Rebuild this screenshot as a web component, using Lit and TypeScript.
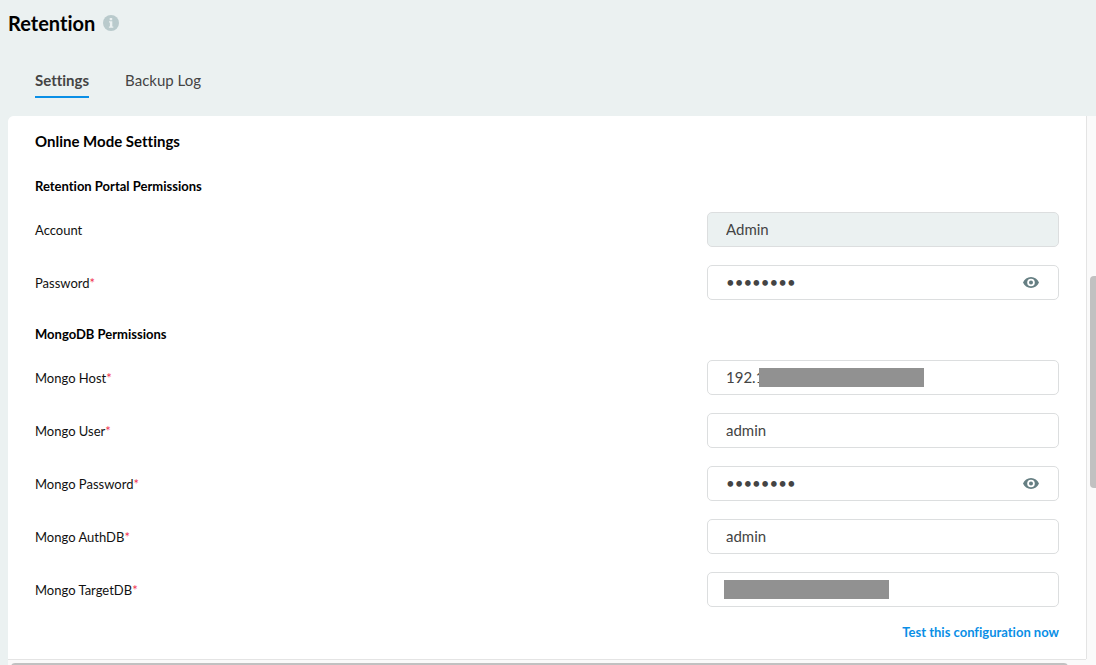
import { LitElement, html, css, svg, nothing } from "lit";
import { customElement, property, state } from "lit/decorators.js";
import { classMap } from "lit/directives/class-map.js";

const eyeIcon = svg`<path fill-rule="evenodd" d="M8 0C4.4 0 1.4 2.1 0 5.5C1.4 8.9 4.4 11 8 11s6.600-2.100 8-5.500C14.600 2.100 11.600 0 8 0zM8 1.700a3.800 3.800 0 1 1 0 7.600a3.800 3.800 0 1 1 0-7.600zM8 3.500a2 2 0 1 0 0 4a2 2 0 1 0 0-4z" />`;

@customElement("form-field")
class FormField extends LitElement {
  @property() label = "";
  @property() value = "";
  @property() mask = "";
  @property({ type: Boolean }) secret = false;
  @property({ type: Boolean }) required = false;
  @property({ type: Boolean }) locked = false;
  @state() private revealed = false;

  static styles = css`
    :host {
      display: grid;
      grid-template-columns: 1fr minmax(200px, 352px);
      align-items: center;
    }
    .label {
      font-size: 13px;
      line-height: 20px;
      color: #111;
    }
    .star {
      color: #f0324f;
    }
    .control {
      position: relative;
      display: flex;
      align-items: center;
      height: 35px;
      box-sizing: border-box;
      border: 1px solid #dcdedf;
      border-radius: 5px;
      background: #fff;
    }
    .control.locked {
      background: #ebf1f1;
    }
    .input {
      flex: 1;
      min-width: 0;
      height: 33px;
      box-sizing: border-box;
      padding: 0 18px 2px;
      border: 0;
      outline: 0;
      background: none;
      font-family: inherit;
      font-size: 15px;
      color: #444;
    }
    .eye {
      display: flex;
      padding: 0;
      margin-right: 19px;
      border: 0;
      background: none;
      color: #667f83;
      cursor: pointer;
    }
    .mask {
      position: absolute;
      top: 7px;
      width: 165px;
      height: 19px;
      background: #919191;
    }
    .mask.partial {
      left: 51px;
    }
    .mask.full {
      left: 16px;
    }
  `;

  render() {
    return html`
      <label class="label" for="input"
        >${this.label}${this.required ? html`<span class="star">*</span>` : nothing}</label
      >
      <div class=${classMap({ control: true, locked: this.locked })}>
        <input
          id="input"
          class="input"
          type=${this.secret && !this.revealed ? "password" : "text"}
          .value=${this.value}
          ?readonly=${this.locked}
        />
        ${this.mask ? html`<span class="mask ${this.mask}"></span>` : nothing}
        ${this.secret
          ? html`<button
              class="eye"
              type="button"
              aria-label="Show password"
              @click=${() => (this.revealed = !this.revealed)}
            >
              <svg width="16" height="11" viewBox="0 0 16 11" fill="currentColor">${eyeIcon}</svg>
            </button>`
          : nothing}
      </div>
    `;
  }
}

@customElement("app-root")
class AppRoot extends LitElement {
  static styles = css`
    :host {
      display: flex;
      flex-direction: column;
      height: 100vh;
      overflow: hidden;
      background: #ebf1f1;
      font-family: Lato, "Liberation Sans", sans-serif;
      font-variant-ligatures: none;
      color: #000;
    }
    .header {
      display: flex;
      align-items: center;
      gap: 8px;
      padding: 9px 8px 0;
    }
    .title {
      margin: 0;
      font-size: 20px;
      line-height: 28px;
      font-weight: 700;
    }
    .info {
      display: block;
    }
    .tabs {
      display: flex;
      gap: 36px;
      padding: 31px 35px 18px;
    }
    .tab {
      padding-bottom: 4px;
      border-bottom: 2px solid transparent;
      font-size: 15px;
      line-height: 24px;
      color: #444;
      text-decoration: none;
    }
    .tab.active {
      font-weight: 700;
      border-color: #0a8fe6;
    }
    .frame {
      flex: 1;
      min-height: 0;
      display: grid;
      grid-template-columns: 1fr 10px;
      grid-template-rows: 1fr 6px;
      margin-left: 8px;
      border-top-left-radius: 6px;
      overflow: hidden;
      background: #fafafa;
    }
    .panel {
      min-height: 0;
      overflow: hidden;
      padding: 14px 27px 0;
      background: #fff;
    }
    .heading {
      margin: 0;
      font-size: 15px;
      line-height: 22px;
      font-weight: 700;
    }
    .subheading {
      margin: 0;
      padding: 24px 0 16px;
      font-size: 13px;
      line-height: 20px;
      font-weight: 700;
    }
    .group {
      display: flex;
      flex-direction: column;
      gap: 18px;
    }
    .actions {
      display: flex;
      justify-content: flex-end;
      padding-top: 15px;
    }
    .test {
      font-size: 13px;
      line-height: 20px;
      font-weight: 700;
      color: #0a8fe6;
      text-decoration: none;
    }
    .vtrack {
      display: grid;
      grid-template-rows: 160fr 212fr 171fr;
      border-left: 1px solid #e4e4e4;
      padding-left: 3px;
    }
    .vthumb {
      grid-row: 2;
      border-radius: 4px 0 0 4px;
      background: #c1c1c1;
    }
    .htrack {
      border-top: 1px solid #e4e4e4;
      padding: 3px 18px 0 3px;
    }
    .hthumb {
      height: 8px;
      border-radius: 4px;
      background: #c1c1c1;
    }
  `;

  render() {
    return html`
      <header class="header">
        <h1 class="title">Retention</h1>
        <svg class="info" width="16" height="16" viewBox="0 0 16 16">
          <circle cx="8" cy="8" r="8" fill="#b9cacc" />
          <path fill="#ebf1f1" d="M6.700 3h2.500v2.200H6.700zM6 6.200h3.300v5.200h1v1.400H5.900v-1.400h1V7.600H6z" />
        </svg>
      </header>
      <nav class="tabs">
        <a class="tab active" href="#settings">Settings</a>
        <a class="tab" href="#backup-log">Backup Log</a>
      </nav>
      <div class="frame">
        <main class="panel">
          <h2 class="heading">Online Mode Settings</h2>
          <h3 class="subheading">Retention Portal Permissions</h3>
          <div class="group">
            <form-field label="Account" value="Admin" locked></form-field>
            <form-field label="Password" value="password" required secret></form-field>
          </div>
          <h3 class="subheading">MongoDB Permissions</h3>
          <div class="group">
            <form-field label="Mongo Host" value="192.1" mask="partial" required></form-field>
            <form-field label="Mongo User" value="admin" required></form-field>
            <form-field label="Mongo Password" value="password" required secret></form-field>
            <form-field label="Mongo AuthDB" value="admin" required></form-field>
            <form-field label="Mongo TargetDB" mask="full" required></form-field>
          </div>
          <div class="actions">
            <a class="test" href="#test">Test this configuration now</a>
          </div>
        </main>
        <div class="vtrack"><div class="vthumb"></div></div>
        <div class="htrack"><div class="hthumb"></div></div>
      </div>
    `;
  }
}
